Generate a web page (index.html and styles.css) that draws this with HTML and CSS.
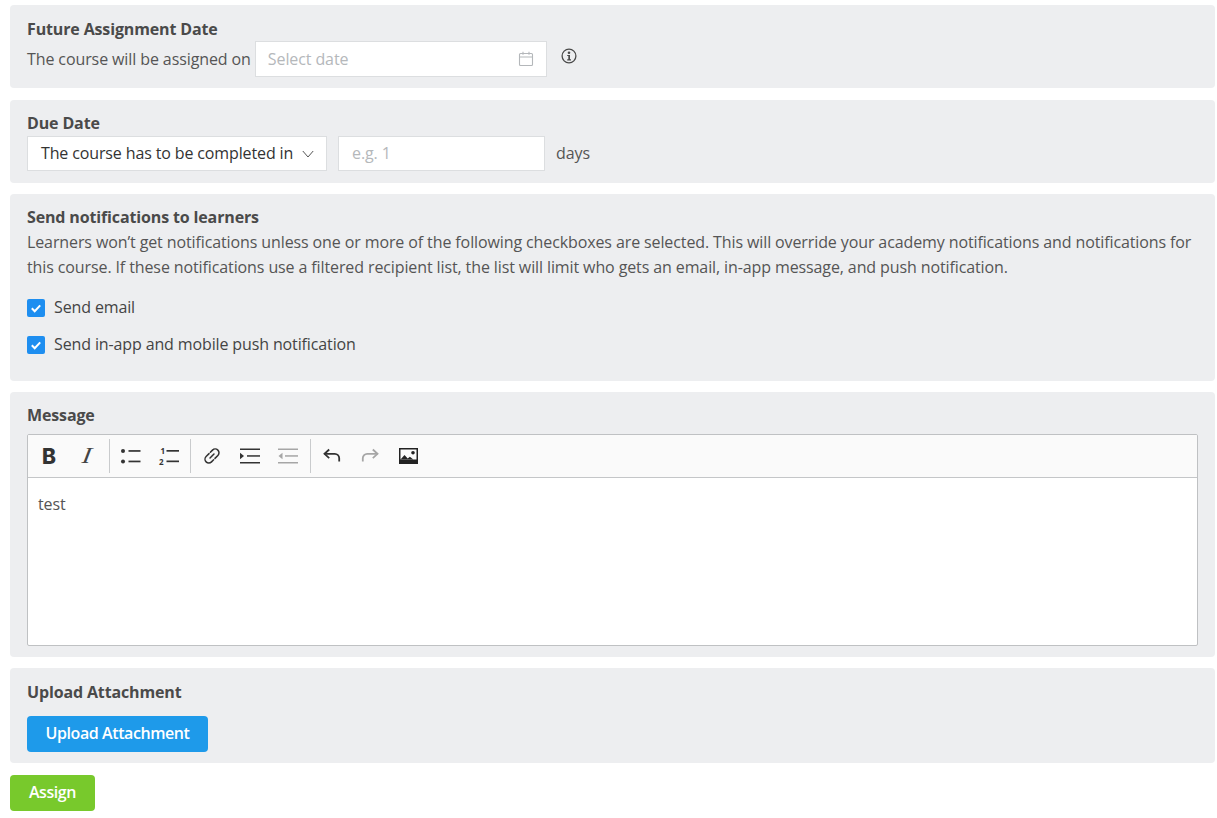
FILE: index.html
```html
<!DOCTYPE html>
<html lang="en">
<head>
<meta charset="utf-8">
<title>Assign course</title>
<link rel="stylesheet" href="styles.css">
</head>
<body>
<main class="page">
  <section class="panel panel-future">
    <h3 class="panel-title">Future Assignment Date</h3>
    <div class="row">
      <span class="row-text">The course will be assigned on</span>
      <div class="date-field">
        <span class="placeholder">Select date</span>
        <svg class="cal-icon" width="16" height="16" viewBox="0 0 16 16" fill="none" stroke="#b4b7ba" stroke-width="1.1"><rect x="1.5" y="2.5" width="13" height="12" rx="1"/><path d="M1.5 6h13M5 .8v3M11 .8v3"/></svg>
      </div>
      <svg class="info-icon" width="16" height="16" viewBox="0 0 16 16"><circle cx="8" cy="8" r="6.9" fill="none" stroke="#4a4a4a" stroke-width="1.3"/><circle cx="8" cy="4.8" r="1.3" fill="#4a4a4a"/><path d="M6.2 6.9h2.8v4.3h1v1.2H6.2v-1.2h1.1V8.1H6.2z" fill="#4a4a4a"/></svg>
    </div>
  </section>

  <section class="panel panel-due">
    <h3 class="panel-title">Due Date</h3>
    <div class="row">
      <div class="select-field">
        <span class="select-text">The course has to be completed in</span>
        <svg width="12" height="8" viewBox="0 0 12 8" fill="none" stroke="#555" stroke-width="1"><path d="M.8 1l5.2 6 5.2-6"/></svg>
      </div>
      <div class="num-field"><span class="placeholder">e.g. 1</span></div>
      <span class="row-text days">days</span>
    </div>
  </section>

  <section class="panel panel-notify">
    <h3 class="panel-title">Send notifications to learners</h3>
    <p class="desc">Learners won’t get notifications unless one or more of the following checkboxes are selected. This will override your academy notifications and notifications for this course. If these notifications use a filtered recipient list, the list will limit who gets an email, in-app message, and push notification.</p>
    <div class="check-row">
      <span class="check"><svg width="18" height="18" viewBox="0 0 18 18" fill="none" stroke="#fff" stroke-width="2"><path d="M4.8 9.3l2.9 2.9 5.5-5.8"/></svg></span>
      <span class="check-label">Send email</span>
    </div>
    <div class="check-row">
      <span class="check"><svg width="18" height="18" viewBox="0 0 18 18" fill="none" stroke="#fff" stroke-width="2"><path d="M4.8 9.3l2.9 2.9 5.5-5.8"/></svg></span>
      <span class="check-label">Send in-app and mobile push notification</span>
    </div>
  </section>

  <section class="panel panel-message">
    <h3 class="panel-title">Message</h3>
    <div class="editor">
      <div class="toolbar">
        <span class="tool tool-b">B</span>
        <span class="tool tool-i">I</span>
        <span class="sep"></span>
        <span class="tool"><svg width="22" height="18" viewBox="0 0 22 18" fill="#333"><circle cx="3" cy="4" r="2"/><circle cx="3" cy="14.5" r="2"/><rect x="8.5" y="3.1" width="12" height="1.7"/><rect x="8.5" y="13.6" width="12" height="1.7"/></svg></span>
        <span class="tool"><svg width="22" height="20" viewBox="0 0 22 20" fill="#333"><text x="2.5" y="8" class="num">1</text><text x="1" y="18.5" class="num">2</text><rect x="8.5" y="4" width="12.5" height="1.7"/><rect x="8.5" y="14.5" width="12.5" height="1.7"/></svg></span>
        <span class="sep sep-tight"></span>
        <span class="tool"><svg width="18" height="18" viewBox="0 0 18 18" fill="none" stroke="#333" stroke-width="1.5" stroke-linecap="round"><g transform="rotate(-45 9 9)"><path d="M8.6 5.2H4.5a3.8 3.8 0 0 0 0 7.6h3"/><path d="M9.4 12.8h4.1a3.8 3.8 0 0 0 0-7.6h-3"/><path d="M6.2 9h5.6"/></g></svg></span>
        <span class="tool"><svg width="20" height="16" viewBox="0 0 20 16" fill="#333"><rect x="0" y="0.5" width="20" height="1.5"/><rect x="0" y="14" width="20" height="1.5"/><rect x="7" y="7.2" width="13" height="1.5"/><path d="M0 4.8l4 3.2-4 3.2z"/></svg></span>
        <span class="tool"><svg width="20" height="16" viewBox="0 0 20 16" fill="#a6a6a6"><rect x="0" y="0.5" width="20" height="1.5"/><rect x="0" y="14" width="20" height="1.5"/><rect x="7" y="7.2" width="13" height="1.5"/><path d="M4.5 4.8L.5 8l4 3.2z"/></svg></span>
        <span class="sep"></span>
        <span class="tool"><svg width="18" height="16" viewBox="0 0 18 16" fill="none" stroke="#333" stroke-width="1.8"><path d="M6.2 1.5L1.5 5.8l4.7 4.3"/><path d="M1.5 5.8h10.3a4.4 4.4 0 0 1 4.4 4.4v3.3"/></svg></span>
        <span class="tool"><svg width="18" height="16" viewBox="0 0 18 16" fill="none" stroke="#a6a6a6" stroke-width="1.8"><path d="M11.8 1.5l4.7 4.3-4.7 4.3"/><path d="M16.5 5.8H6.2a4.4 4.4 0 0 0-4.4 4.4v3.3"/></svg></span>
        <span class="tool"><svg width="19" height="16" viewBox="0 0 19 16"><rect width="19" height="16" fill="#222"/><rect x="1.5" y="1.5" width="16" height="10" fill="#fafafa"/><circle cx="14" cy="4.8" r="1.8" fill="#222"/><path d="M1.5 11.5l4-4.4 3.2 3.4 2.2-1.8 3.4 2.8z" fill="#222"/></svg></span>
      </div>
      <div class="editor-body">test</div>
    </div>
  </section>

  <section class="panel panel-upload">
    <h3 class="panel-title">Upload Attachment</h3>
    <button class="btn btn-blue">Upload Attachment</button>
  </section>

  <button class="btn btn-green">Assign</button>
</main>
</body>
</html>
```

FILE: styles.css
```css
* { box-sizing: border-box; }
html, body { margin: 0; padding: 0; background: #fff; overflow: hidden; }
body {
  font-family: "Open Sans", "Noto Sans", sans-serif;
  font-size: 16px;
  color: #555;
}
.page {
  width: 1217px;
  height: 818px;
  padding: 5px 2px 0 10px;
  display: flex;
  flex-direction: column;
}
.panel {
  background: #edeef0;
  border-radius: 4px;
  padding: 12px 17px 0;
  flex: none;
}
.panel-future { height: 83px; padding-top: 13px; }
.panel-due { height: 83px; margin-top: 12px; }
.panel-notify { height: 187px; margin-top: 11px; }
.panel-message { height: 265px; margin-top: 11px; }
.panel-upload { height: 95px; margin-top: 11px; padding-top: 13px; }
.panel-title {
  margin: 0;
  font-size: 16px;
  line-height: 23px;
  font-weight: 700;
  color: #4a4a4a;
  letter-spacing: -0.14px;
}
.row { display: flex; align-items: center; }
.panel-due .row { margin-top: 1px; }
.row-text { white-space: nowrap; letter-spacing: -0.1px; }
.placeholder { color: #b5b8bb; }
.date-field {
  width: 292px;
  height: 36px;
  margin-left: 4px;
  padding: 0 12px;
  background: #fff;
  border: 1px solid #dcdee0;
  display: flex;
  align-items: center;
  justify-content: space-between;
  letter-spacing: -0.1px;
}
.cal-icon { flex: none; margin-right: 0; }
.info-icon { flex: none; margin: -7px 0 0 14px; }
.select-field {
  width: 300px;
  height: 35px;
  padding: 0 12px 0 13px;
  background: #fff;
  border: 1px solid #dcdee0;
  color: #333;
  display: flex;
  align-items: center;
  justify-content: space-between;
  white-space: nowrap;
  letter-spacing: -0.13px;
}
.select-text { margin-bottom: 2px; }
.num-field {
  width: 207px;
  height: 35px;
  margin-left: 11px;
  padding: 0 13px 2px;
  background: #fff;
  border: 1px solid #dcdee0;
  display: flex;
  align-items: center;
  letter-spacing: -0.1px;
}
.days { margin: 0 0 2px 11px; }
.desc {
  margin: 1px 0 18px;
  line-height: 25px;
  letter-spacing: -0.11px;
}
.check-row {
  display: flex;
  align-items: center;
  height: 19px;
  margin-bottom: 18px;
  color: #444;
}
.check {
  width: 18px;
  height: 18px;
  border-radius: 2px;
  background: #1e8ef0;
  display: block;
  flex: none;
  margin-top: 1px;
}
.check svg { display: block; }
.check-label { margin: 0 0 2px 9px; letter-spacing: -0.125px; }
.panel-message .editor { margin-top: 7px; }
.editor {
  height: 212px;
  width: 1171px;
  background: #fff;
  border: 1px solid #bfc1c3;
  border-radius: 2px;
  display: flex;
  flex-direction: column;
  overflow: hidden;
}
.toolbar {
  height: 43px;
  flex: none;
  background: #fafafa;
  border-bottom: 1px solid #c4c6c8;
  display: flex;
  align-items: center;
  padding-left: 2px;
}
.tool {
  width: 38px;
  height: 34px;
  flex: none;
  display: flex;
  align-items: center;
  justify-content: center;
}
.tool-b {
  font-family: "Inter", sans-serif;
  font-weight: 800;
  font-size: 21px;
  color: #333;
}
.tool-i {
  font-family: "Liberation Serif", serif;
  font-style: italic;
  font-size: 23px;
  color: #444;
  transform: skewX(-10deg) scaleX(1.15);
}
.num { font-family: "Open Sans", sans-serif; font-size: 8px; font-weight: 700; }
.sep {
  width: 1px;
  height: 34px;
  background: #c9cbcd;
  flex: none;
  margin: 0 2px 0 3px;
}
.sep-tight { margin: 0 2px; }
.editor-body {
  flex: 1;
  padding: 14px 10px;
  line-height: 24px;
  color: #555;
  letter-spacing: -0.1px;
}
.btn {
  display: block;
  height: 36px;
  border: 0;
  border-radius: 4px;
  color: #fff;
  font-family: inherit;
  font-size: 16px;
  font-weight: 600;
  letter-spacing: -0.42px;
  padding: 0 0 2px;
}
.btn-blue {
  width: 181px;
  margin-top: 12px;
  background: #1e9aea;
}
.btn-green {
  width: 85px;
  margin-top: 12px;
  background: #78c92c;
  flex: none;
}
```
